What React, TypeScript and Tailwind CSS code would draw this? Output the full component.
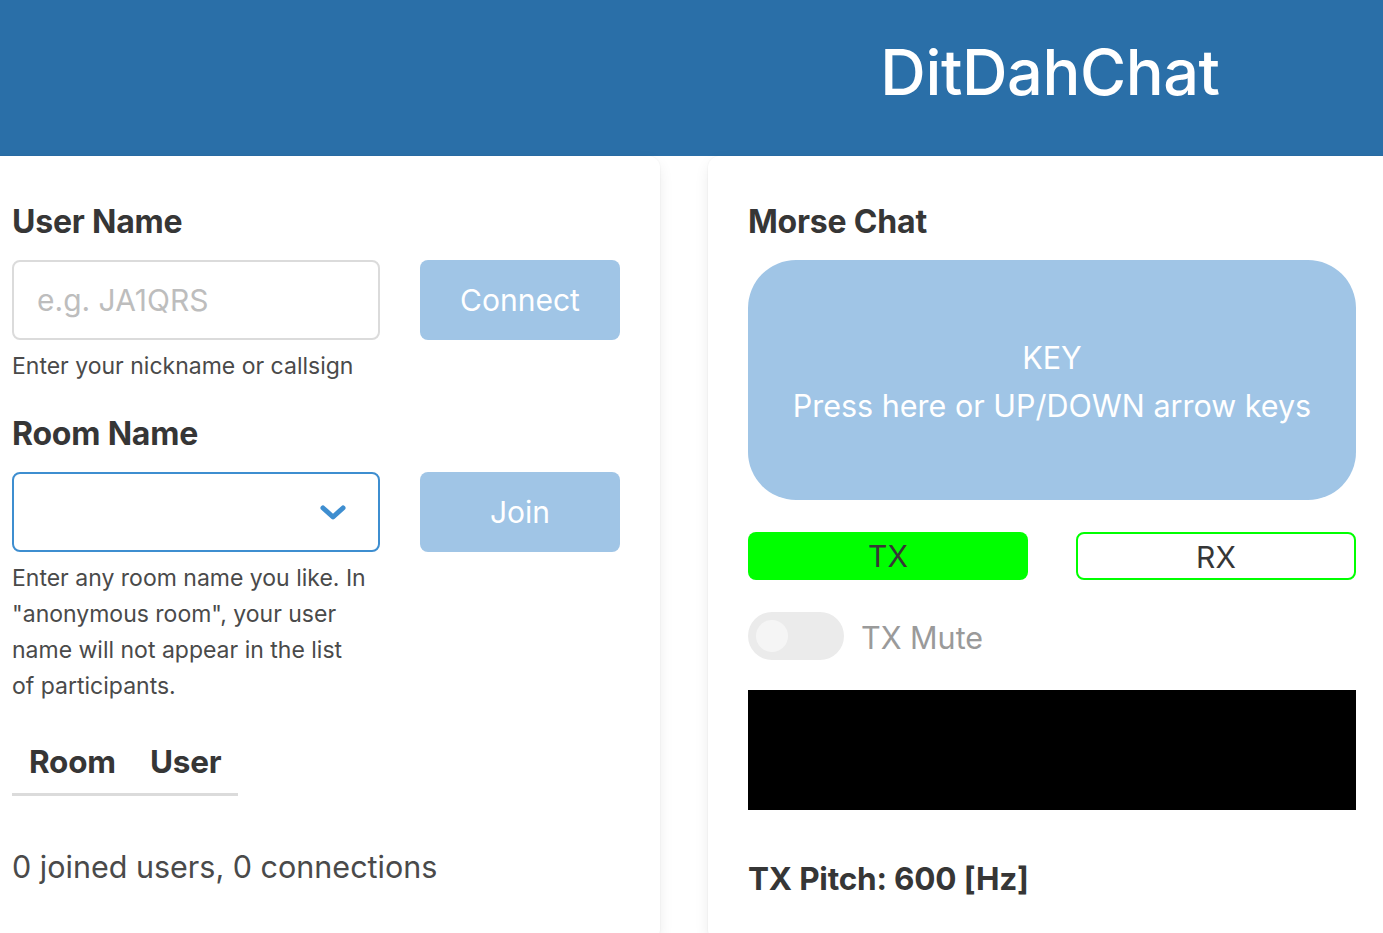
import { useState } from 'react'

const font = { fontFamily: 'Inter, "Noto Sans", sans-serif' }

export default function App() {
  const [muted, setMuted] = useState(false)
  const [tab, setTab] = useState('Room')

  return (
    <div className="h-[933px] w-[1383px] overflow-hidden bg-white" style={font}>
      <header className="flex h-[156px] bg-[#2a6fa8]">
        <div className="w-[748px] shrink-0" />
        <h1 className="flex w-[608px] shrink-0 items-center justify-center pr-[4px] pb-[12px] text-[63px] font-medium tracking-[-0.4px] text-white">
          DitDahChat
        </h1>
      </header>

      <div className="ml-[-28px] flex gap-[48px]">
        {/* left: connection */}
        <section className="w-[688px] shrink-0 rounded-[12px] px-[40px] pb-[40px] pt-[43px] shadow-[0_6px_16px_-2px_rgba(10,10,10,0.1),0_0_0_1px_rgba(10,10,10,0.02)]">
          <h2 className="mb-[16px] text-[32px] leading-[45px] font-bold tracking-[-0.2px] text-[#363636]">User Name</h2>
          <div className="flex gap-[40px]">
            <input
              className="h-[80px] w-[368px] rounded-[8px] border-2 border-[#dbdbdb] px-[23px] text-[30px] text-[#363636] outline-none placeholder:text-[#bdbdbd]"
              placeholder="e.g. JA1QRS"
            />
            <button
              className="h-[80px] w-[200px] rounded-[8px] bg-[#a0c5e6] text-[30px] text-white"
              type="button"
            >
              Connect
            </button>
          </div>
          <p className="mt-[8px] text-[23px] leading-[36px] text-[#4a4a4a]">Enter your nickname or callsign</p>

          <h2 className="mt-[27px] mb-[16px] text-[32px] leading-[45px] font-bold tracking-[-0.2px] text-[#363636]">Room Name</h2>
          <div className="flex gap-[40px]">
            <div className="relative h-[80px] w-[368px] rounded-[8px] border-2 border-[#3e8ed0]">
              <svg className="absolute top-[31px] right-[32px]" width="26" height="16" viewBox="0 0 26 16">
                <polyline
                  points="3,3 13,12 23,3"
                  fill="none"
                  stroke="#3e8ed0"
                  strokeWidth="5"
                  strokeLinecap="round"
                  strokeLinejoin="round"
                />
              </svg>
            </div>
            <button
              className="h-[80px] w-[200px] rounded-[8px] bg-[#a0c5e6] text-[30px] text-white"
              type="button"
            >
              Join
            </button>
          </div>
          <p className="mt-[8px] w-[356px] text-[23px] leading-[36px] text-[#4a4a4a]">
            Enter any room name you like. In "anonymous room", your user name will not appear in the list of participants.
          </p>

          <ul className="mt-[35px] flex w-fit border-b-[3px] border-[#dbdbdb]">
            {['Room', 'User'].map((name) => (
              <li key={name}>
                <button
                  className="px-[17px] pb-[9px] text-[31.5px] leading-[45px] font-bold tracking-[-0.2px] text-[#363636]"
                  onClick={() => setTab(name)}
                  type="button"
                >
                  {name}
                </button>
              </li>
            ))}
          </ul>

          <p className="mt-[48px] text-[30.5px] leading-[45px] text-[#4a4a4a]">
            {tab === 'Room' ? '0 joined users, 0 connections' : '0 joined users, 0 connections'}
          </p>
        </section>

        {/* right: morse chat */}
        <section className="w-[688px] shrink-0 rounded-[12px] px-[40px] pb-[40px] pt-[43px] shadow-[0_6px_16px_-2px_rgba(10,10,10,0.1),0_0_0_1px_rgba(10,10,10,0.02)]">
          <h2 className="mb-[16px] text-[32px] leading-[45px] font-bold tracking-[-0.2px] text-[#363636]">Morse Chat</h2>
          <button
            className="flex h-[240px] w-[608px] flex-col items-center justify-center rounded-[48px] bg-[#a0c5e6] pt-[4px] text-[30.5px] leading-[48px] text-white"
            type="button"
          >
            <span>KEY</span>
            <span>Press here or UP/DOWN arrow keys</span>
          </button>

          <div className="mt-[32px] flex gap-[48px]">
            <div className="flex h-[48px] w-[280px] items-center justify-center rounded-[8px] bg-[#00ff00] text-[30px] text-[#363636]">
              TX
            </div>
            <div className="flex h-[48px] w-[280px] items-center justify-center rounded-[8px] border-2 border-[#00ff00] pt-[2px] text-[30px] text-[#363636]">
              RX
            </div>
          </div>

          <label className="mt-[32px] flex h-[48px] items-center gap-[17px]">
            <button
              className="flex h-[48px] w-[96px] items-center rounded-full bg-[#ebebeb] px-[8px]"
              onClick={() => setMuted((value) => !value)}
              type="button"
            >
              <span className={muted ? 'ml-auto size-[32px] rounded-full bg-[#f5f5f5]' : 'size-[32px] rounded-full bg-[#f5f5f5]'} />
            </button>
            <span className="pt-[4px] text-[30.5px] leading-[44px] text-[#9a9a9a]">TX Mute</span>
          </label>

          <div className="mt-[30px] h-[120px] w-[608px] bg-black" />

          <p className="mt-[46px] text-[31.5px] leading-[45px] font-bold tracking-[-0.2px] text-[#363636]">TX Pitch: 600 [Hz]</p>
        </section>
      </div>
    </div>
  )
}
